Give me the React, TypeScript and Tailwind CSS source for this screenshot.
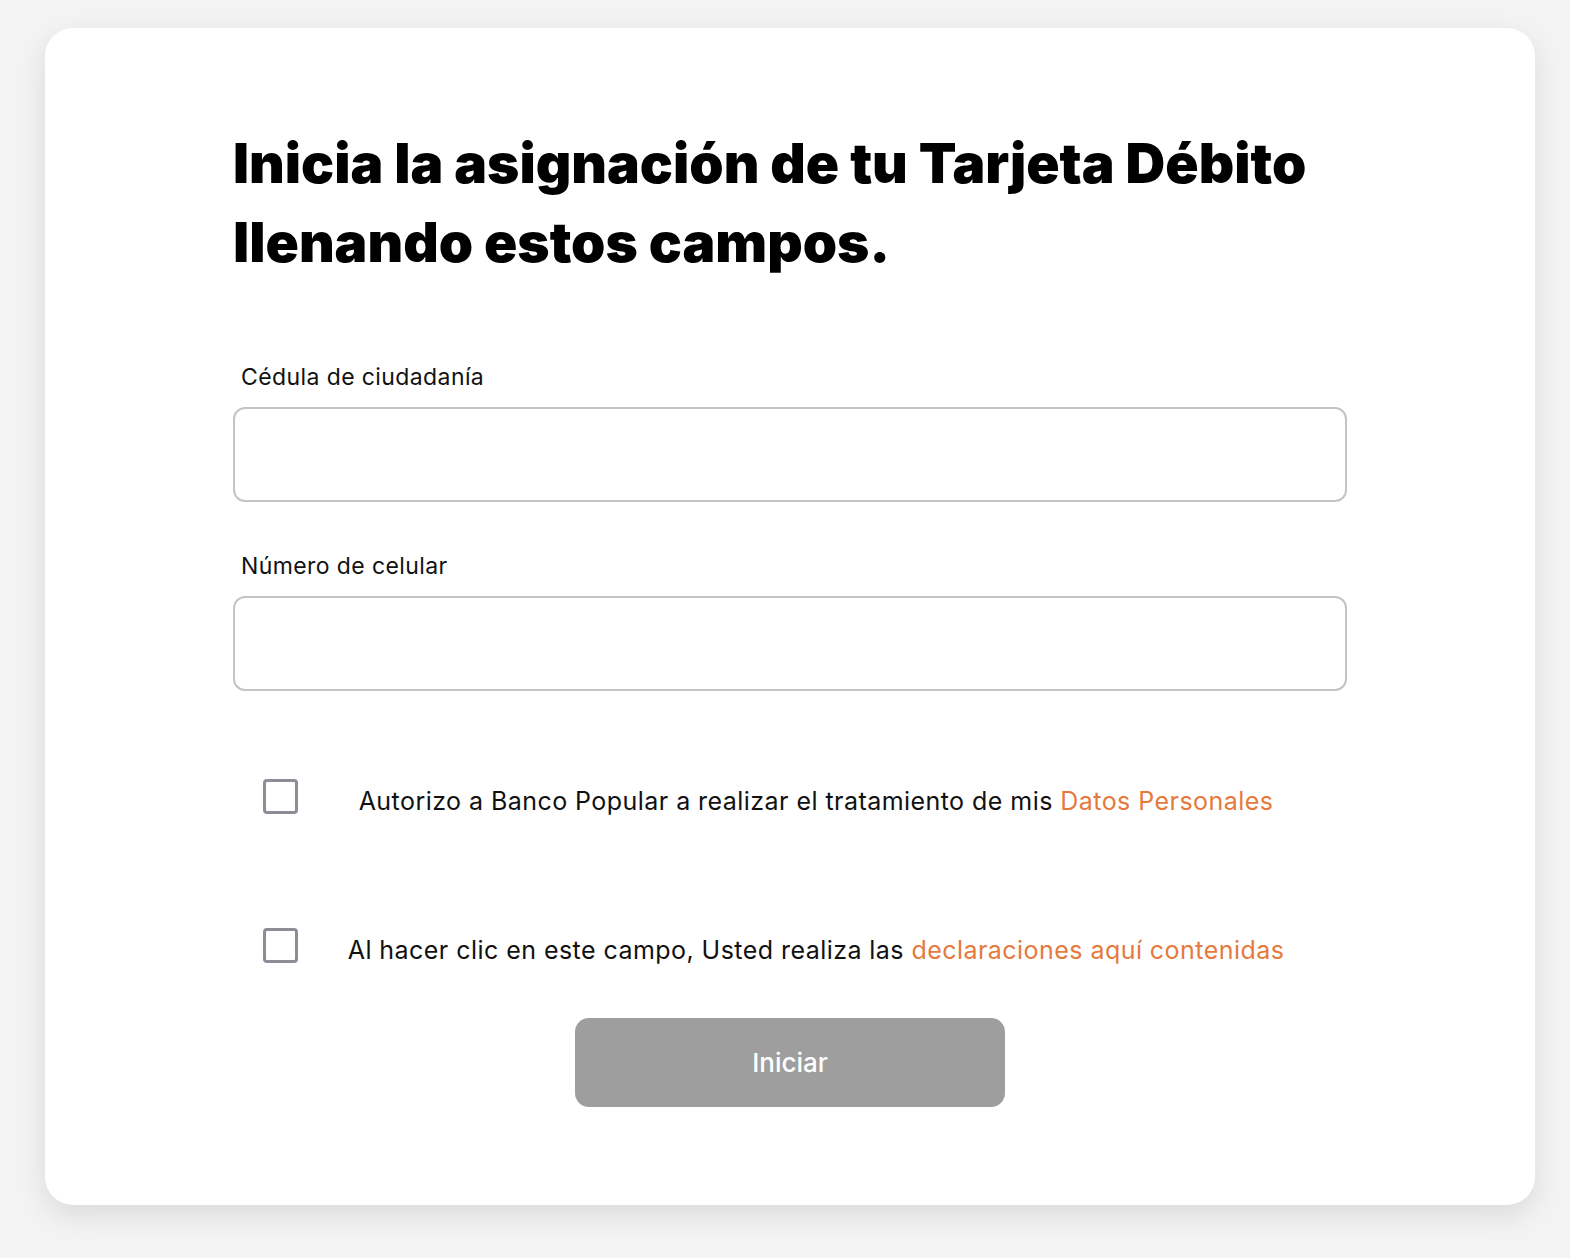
import React from 'react';

const Field: React.FC<{ label: string; className?: string }> = ({ label, className }) => {
  return (
    <div className={className}>
      <label className="block pl-[8px] text-[23px] leading-[30px] tracking-[0.4px] text-[#111]">{label}</label>
      <input
        type="text"
        className="mt-[15px] block h-[95px] w-full rounded-[12px] border-2 border-[#c4c4c4] bg-white px-4 text-[22px] outline-none"
      />
    </div>
  );
};

const CheckRow: React.FC<{ text: string; link: string; className?: string }> = ({ text, link, className }) => {
  return (
    <div className={`flex items-start pl-[30px] pr-[13px] ${className ?? ''}`}>
      <span className="block h-[35px] w-[35px] shrink-0 rounded-[4px] border-[3px] border-[#8d8d97] bg-white" />
      <p className="mt-[5px] flex-1 text-center text-[25px] leading-[35px] tracking-[0.45px] text-[#111]">
        {text} <span className="text-[#e57a3c]">{link}</span>
      </p>
    </div>
  );
};

const App: React.FC = () => {
  return (
    <div
      className="min-h-screen bg-[#f3f3f3] pl-[45px] pr-[35px] pt-[28px] pb-[20px]"
      style={{ fontFamily: 'Inter, "Noto Sans", sans-serif' }}
    >
      <div className="rounded-[28px] bg-white px-[188px] pt-[96px] pb-[98px] shadow-[0_10px_28px_rgba(0,0,0,0.10)]">
        <h1 className="text-[55px] font-black leading-[79px] text-black">
          Inicia la asignación de tu Tarjeta Débito
          <br />
          llenando estos campos.
        </h1>

        <Field label="Cédula de ciudadanía" className="mt-[80px]" />
        <Field label="Número de celular" className="mt-[49px]" />

        <CheckRow
          className="mt-[88px]"
          text="Autorizo a Banco Popular a realizar el tratamiento de mis"
          link="Datos Personales"
        />
        <CheckRow
          className="mt-[109px]"
          text="Al hacer clic en este campo, Usted realiza las"
          link="declaraciones aquí contenidas"
        />

        <div className="mt-[50px] flex justify-center">
          <button className="h-[89px] w-[430px] rounded-[14px] bg-[#9e9e9e] text-[26px] font-medium text-white">
            Iniciar
          </button>
        </div>
      </div>
    </div>
  );
};

export default App;
